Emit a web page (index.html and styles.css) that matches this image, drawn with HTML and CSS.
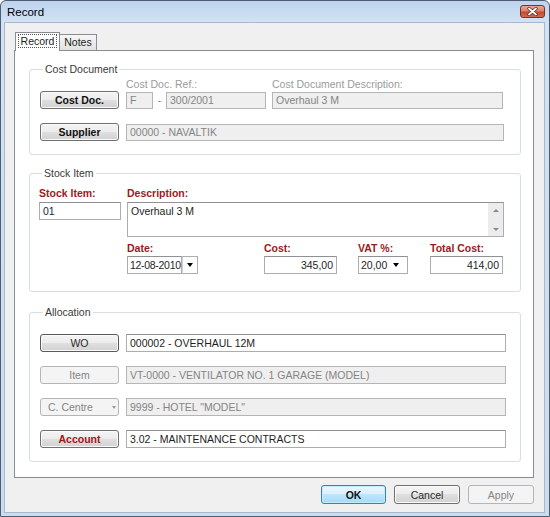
FILE: index.html
```html
<!DOCTYPE html>
<html lang="en">

<head>
    <meta charset="UTF-8">
    <title>Record</title>
    <link rel="stylesheet" href="styles.css">
</head>

<body>
    <div class="window">
        <!-- title bar -->
        <div class="titlebar">
            <span class="title">Record</span>
            <span class="close">
                <svg width="11" height="9" viewBox="0 0 11 9">
                    <path d="M2 1.5 L9 7.5 M9 1.5 L2 7.5" stroke="#5a2018" stroke-width="3.2" stroke-linecap="round" />
                    <path d="M2 1.5 L9 7.5 M9 1.5 L2 7.5" stroke="#fff" stroke-width="1.8" stroke-linecap="round" />
                </svg>
            </span>
        </div>

        <div class="client">
            <div class="tabs">
                <span class="tab active"><span class="focus">Record</span></span>
                <span class="tab">Notes</span>
            </div>

            <div class="panel">
                <!-- Cost Document -->
                <fieldset class="group doc">
                    <legend>Cost Document</legend>
                    <div class="row labels">
                        <span class="lbl grey ref">Cost Doc. Ref.:</span>
                        <span class="lbl grey">Cost Document Description:</span>
                    </div>
                    <div class="row r1">
                        <div class="btn bold">Cost Doc.</div>
                        <div class="box off w-f">F</div>
                        <span class="dash">-</span>
                        <div class="box off w-ref">300/2001</div>
                        <div class="box off w-desc">Overhaul 3 M</div>
                    </div>
                    <div class="row r2">
                        <div class="btn bold">Supplier</div>
                        <div class="box off grow">00000 - NAVALTIK</div>
                    </div>
                </fieldset>

                <!-- Stock Item -->
                <fieldset class="group stock">
                    <legend>Stock Item</legend>
                    <div class="cols">
                        <div class="col-item">
                            <div class="req">Stock Item:</div>
                            <div class="box tall">01</div>
                        </div>
                        <div class="col-desc">
                            <div class="req">Description:</div>
                            <div class="memo">
                                <span class="memo-text">Overhaul 3 M</span>
                                <span class="scroll">
                                    <i class="tri up"></i>
                                    <i class="tri down"></i>
                                </span>
                            </div>
                            <div class="fields">
                                <div class="field">
                                    <div class="req">Date:</div>
                                    <div class="combo">
                                        <div class="box tall w-date">12-08-2010</div>
                                        <div class="drop"><i class="arrow"></i></div>
                                    </div>
                                </div>
                                <div class="field">
                                    <div class="req">Cost:</div>
                                    <div class="box tall num w-num">345,00</div>
                                </div>
                                <div class="field">
                                    <div class="req">VAT %:</div>
                                    <div class="box tall select w-vat">20,00<i class="arrow"></i></div>
                                </div>
                                <div class="field">
                                    <div class="req">Total Cost:</div>
                                    <div class="box tall num w-num">414,00</div>
                                </div>
                            </div>
                        </div>
                    </div>
                </fieldset>

                <!-- Allocation -->
                <fieldset class="group alloc">
                    <legend>Allocation</legend>
                    <div class="row arow">
                        <div class="btn focused">WO</div>
                        <div class="box tall grow">000002 - OVERHAUL 12M</div>
                    </div>
                    <div class="row arow">
                        <div class="btn disabled">Item</div>
                        <div class="box tall off grow">VT-0000 - VENTILATOR NO. 1 GARAGE (MODEL)</div>
                    </div>
                    <div class="row arow">
                        <div class="btn disabled split">C. Centre<i class="arrow grey"></i></div>
                        <div class="box tall off grow">9999 - HOTEL "MODEL"</div>
                    </div>
                    <div class="row arow">
                        <div class="btn bold red">Account</div>
                        <div class="box tall grow">3.02 - MAINTENANCE CONTRACTS</div>
                    </div>
                </fieldset>
            </div>

            <div class="actions">
                <div class="btn dlg ok bold">OK</div>
                <div class="btn dlg">Cancel</div>
                <div class="btn dlg disabled">Apply</div>
            </div>
        </div>
    </div>
</body>

</html>
```

FILE: styles.css
```css
* {
    margin: 0;
    padding: 0;
    box-sizing: border-box;
}

body {
    width: 550px;
    height: 517px;
    font-family: "Liberation Sans", Arial, sans-serif;
    font-size: 10.5px;
    color: #1e1e1e;
    background: #fff;
}

/* window frame */
.window {
    width: 550px;
    height: 517px;
    border: 1px solid #4f5d73;
    border-radius: 6px 6px 0 0;
    padding: 0 4px 3px 3px;
    background: linear-gradient(to bottom, #bdd3ee 0, #d3e2f4 21px, #cadcf0 100%);
    display: flex;
    flex-direction: column;
}

.titlebar {
    height: 21px;
    display: flex;
    justify-content: space-between;
    align-items: flex-start;
}

.title {
    padding: 5px 0 0 3px;
    font-size: 11.5px;
    line-height: 13px;
    color: #000;
}

.close {
    width: 25px;
    height: 13px;
    margin-top: 4px;
    border: 1px solid #7a3128;
    border-radius: 3px;
    background: linear-gradient(to bottom, #e9a99a 0, #d8806d 45%, #c44a31 55%, #cf6a4e 100%);
    display: flex;
    align-items: center;
    justify-content: center;
}

.client {
    flex: 1;
    background: #f0f0f0;
    border: 1px solid #a9b8cb;
    padding: 9px 10px 0 9px;
    display: flex;
    flex-direction: column;
}

/* tabs */
.tabs {
    display: flex;
    align-items: flex-end;
    height: 18px;
    margin-left: 1px;
    position: relative;
    z-index: 1;
}

.tab {
    width: 37px;
    height: 16px;
    line-height: 15px;
    text-align: center;
    border: 1px solid #898c95;
    border-bottom: none;
    border-left: none;
    background: linear-gradient(to bottom, #f7f7f7, #e1e1e1);
}

.tab.active {
    width: 45px;
    height: 19px;
    margin-bottom: -1px;
    border-left: 1px solid #898c95;
    background: #fff;
    padding-top: 1px;
    line-height: 14px;
}

.tab .focus {
    border: 1px dotted #555;
    padding: 0 2px;
}

.panel {
    width: 520px;
    height: 428px;
    border: 1px solid #898c95;
    background: #fff;
    padding: 12px 12px 0 14px;
}

/* group boxes */
.group {
    border: 1px solid #d5dfe5;
    border-radius: 3px;
}

.group legend {
    padding: 0 2px;
    margin-left: 3px;
    line-height: 12px;
    color: #3a3a3a;
}

.row {
    display: flex;
    align-items: center;
}

.doc {
    padding: 3px 16px 13px 10px;
}

.doc .labels {
    height: 12px;
    line-height: 12px;
}

.lbl.grey {
    color: #9b9b9b;
}

.doc .ref {
    margin-left: 86px;
    width: 146px;
}

.doc .r1 {
    margin-top: 1px;
    height: 18px;
}

.doc .r2 {
    margin-top: 14px;
    height: 18px;
}

/* buttons */
.btn {
    width: 79px;
    height: 18px;
    margin-right: 7px;
    border: 1px solid #707070;
    border-radius: 3px;
    background: linear-gradient(to bottom, #f4f4f4 0, #ececec 50%, #dfdfdf 50%, #d2d2d2 100%);
    box-shadow: inset 0 0 0 1px #fbfbfb;
    display: flex;
    align-items: center;
    justify-content: center;
    color: #2a2a2a;
}

.btn.bold {
    font-weight: bold;
    color: #111;
}

.btn.red {
    color: #a3161a;
}

.btn.focused {
    border-color: #5a5a5a;
}

.btn.disabled {
    border-color: #b3b6b9;
    background: #f4f4f4;
    box-shadow: none;
    color: #858585;
}

.btn.split {
    justify-content: flex-start;
    padding-left: 7px;
}

.btn.split .arrow {
    margin-left: 19px;
}

/* text boxes */
.box {
    height: 17px;
    border: 1px solid #abadb3;
    border-top-color: #8e9196;
    background: #fff;
    padding: 0 3px;
    line-height: 15px;
    white-space: nowrap;
    overflow: hidden;
    color: #1e1e1e;
}

.box.tall {
    height: 18px;
    line-height: 16px;
}

.box.off {
    background: #efefef;
    border-color: #b5b5b5;
    color: #858585;
}

.box.grow {
    flex: 1;
}

.w-f {
    width: 27px;
}

.dash {
    width: 13px;
    text-align: center;
    color: #858585;
}

.w-ref {
    width: 100px;
}

.w-desc {
    width: 231px;
    margin-left: 6px;
}

/* stock item */
.stock {
    margin-top: 12px;
    padding: 8px 16px 17px 9px;
}

.cols {
    display: flex;
}

.col-item {
    width: 82px;
    margin-right: 6px;
}

.col-desc {
    flex: 1;
}

.req {
    height: 12px;
    line-height: 12px;
    font-weight: bold;
    color: #9c1a1d;
}

.col-item .box,
.memo {
    margin-top: 3px;
}

.memo {
    height: 35px;
    border: 1px solid #abadb3;
    border-top-color: #8e9196;
    display: flex;
}

.memo-text {
    flex: 1;
    padding: 2px 3px;
    line-height: 12px;
}

.scroll {
    width: 15px;
    background: #ececec;
    display: flex;
    flex-direction: column;
    justify-content: space-between;
    align-items: center;
    padding: 6px 0 5px;
}

.tri {
    width: 0;
    height: 0;
    border-left: 3px solid transparent;
    border-right: 3px solid transparent;
}

.tri.up {
    border-bottom: 3px solid #8a8a8a;
}

.tri.down {
    border-top: 3px solid #8a8a8a;
}

.fields {
    margin-top: 5px;
    display: grid;
    grid-template-columns: 137px 94px 72px 73px;
}

.fields .box,
.combo {
    margin-top: 2px;
}

.combo {
    display: flex;
}

.combo .box {
    margin-top: 0;
}

.w-date {
    width: 55px;
    padding: 0 0 0 2px;
    letter-spacing: -0.3px;
}

.drop {
    width: 16px;
    height: 18px;
    border: 1px solid #abadb3;
    border-left: 1px solid #d0d0d0;
    background: #fff;
    display: flex;
    align-items: center;
    justify-content: center;
}

.arrow {
    display: inline-block;
    width: 0;
    height: 0;
    border-left: 3.5px solid transparent;
    border-right: 3.5px solid transparent;
    border-top: 4px solid #000;
}

.arrow.grey {
    border-left-width: 2.5px;
    border-right-width: 2.5px;
    border-top: 3px solid #999;
}

.w-num {
    width: 73px;
}

.num {
    text-align: right;
}

.select {
    width: 50px;
    display: flex;
    align-items: center;
    justify-content: space-between;
    padding-right: 8px;
    padding-left: 2px;
}

/* allocation */
.alloc {
    margin-top: 14px;
    padding: 16px 14px 13px 10px;
}

.arow {
    height: 18px;
    margin-top: 14px;
}

.arow:first-of-type {
    margin-top: 0;
}

/* dialog buttons */
.actions {
    display: flex;
    justify-content: flex-end;
    gap: 8px;
    margin-top: 7px;
}

.btn.dlg {
    width: 66px;
    height: 19px;
    margin-right: 0;
}

.btn.ok {
    width: 65px;
    border-color: #3c7fb1;
    background: linear-gradient(to bottom, #eaf6fd 0, #d9f0fc 50%, #bee6fd 50%, #a7d9f5 100%);
    box-shadow: inset 0 0 0 1px #c5ecfc;
}
```
